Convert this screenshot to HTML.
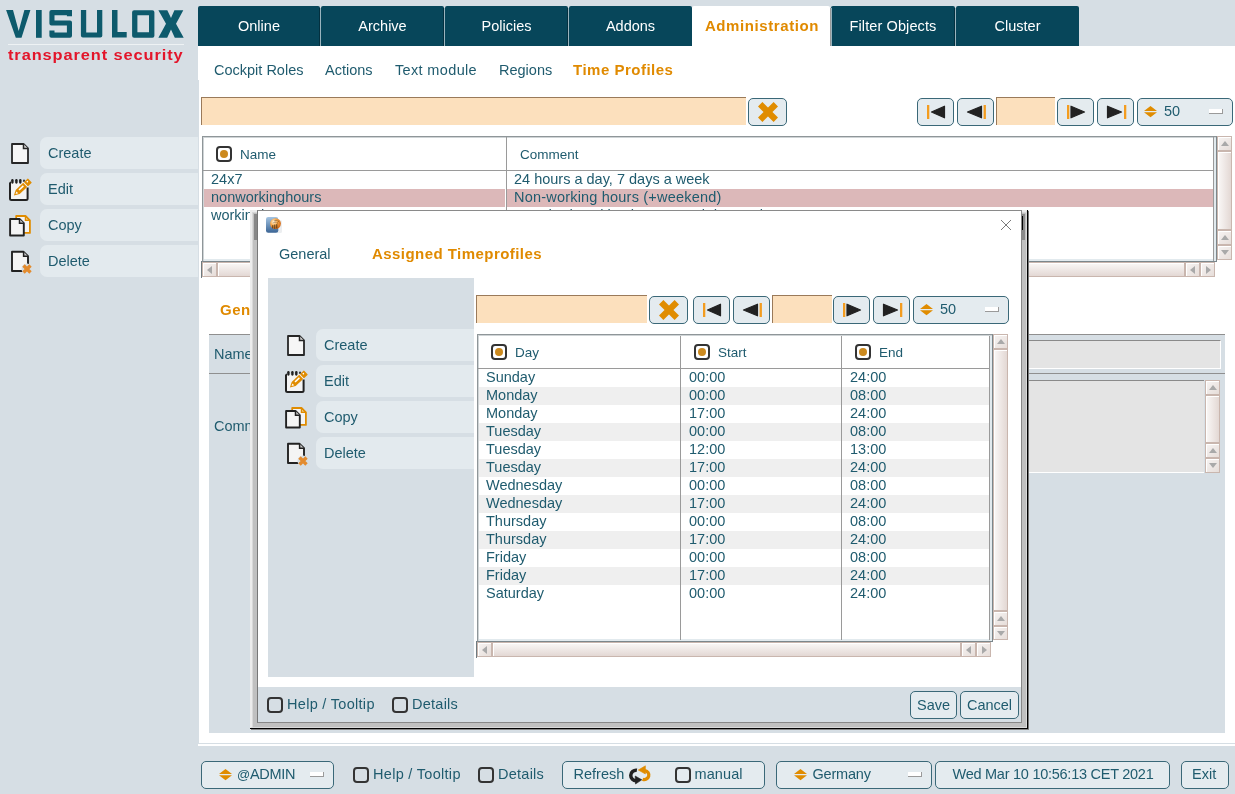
<!DOCTYPE html>
<html><head><meta charset="utf-8">
<style>
*{box-sizing:border-box;margin:0;padding:0}
html,body{width:1235px;height:794px;overflow:hidden}
body{background:#d6dee4;font-family:"Liberation Sans",sans-serif;color:#1f5b6e;position:relative;font-size:14.5px}
.a{position:absolute}
.t{position:absolute;white-space:nowrap;line-height:18px}
svg{position:absolute;overflow:visible}
.tab{position:absolute;top:6px;height:40px;background:#07465a;color:#fff;font-size:14.5px;display:flex;align-items:center;justify-content:center;border-radius:2px 2px 0 0}
.sep{position:absolute;top:8px;width:1px;height:38px;background:#9ab4be;box-shadow:-1px 0 0 #03303f}
.btn{position:absolute;background:#e4ebef;border:1px solid #3a6878;border-radius:5px}
.filt{position:absolute;background:#fce0bd;border-top:1px solid #9a7a5a;border-left:1px solid #9a7a5a}
.side{position:absolute;left:40px;width:158px;height:32px;background:#e3eaee;border-radius:7px 0 0 7px;line-height:32px;padding-left:8px}
.orange{color:#e08a00}
.radio{position:absolute;width:16px;height:16px;border:2px solid #333;border-radius:4px;background:#fff}
.radio:after{content:"";position:absolute;left:2px;top:2px;width:8px;height:8px;border-radius:50%;background:#cc8a1f}
.chk{position:absolute;width:16px;height:16px;border:2px solid #333;border-radius:4px;background:transparent}
.sbx{position:absolute;border:1px solid #c9b6ae;background:linear-gradient(135deg,#f7f4f3,#e6ddd9);box-shadow:inset 1px 1px 0 #fff}
.sbx.th{background:linear-gradient(90deg,#faf8f7,#e3d8d4)}
.sbx.thh{background:linear-gradient(180deg,#faf8f7,#e3d8d4)}
.sbx:after{content:"";position:absolute;width:0;height:0}
.sbx.up:after{left:2.5px;top:4px;border-left:4px solid transparent;border-right:4px solid transparent;border-bottom:5px solid #a9a9a9}
.sbx.dn:after{left:2.5px;top:4px;border-left:4px solid transparent;border-right:4px solid transparent;border-top:5px solid #a9a9a9}
.sbx.lf:after{left:4px;top:2.5px;border-top:4px solid transparent;border-bottom:4px solid transparent;border-right:5px solid #a9a9a9}
.sbx.rt:after{left:5px;top:2.5px;border-top:4px solid transparent;border-bottom:4px solid transparent;border-left:5px solid #a9a9a9}
.hd{font-size:13.5px}
.rw span{position:absolute;top:-1px}
.dash{position:absolute;width:14px;height:5px;background:#fff;border-right:1px solid #9a9a9a;border-bottom:1.5px solid #9a9a9a}
</style></head><body><div id="root" style="position:absolute;left:0;top:0;width:1235px;height:794px;background:#d6dee4;will-change:transform">
<svg width="0" height="0" style="position:absolute">
<defs>
<g id="ix"><path d="M2.2 2.2L17.8 17.8M17.8 2.2L2.2 17.8" stroke="#e08c00" stroke-width="6.2"/></g>
<g id="pfirst"><rect x="10" y="7" width="2.3" height="14" fill="#f39c1f"/><path d="M14.5 14L27.5 8.2V19.8Z" fill="#222" stroke="#222" stroke-width="1.2" stroke-linejoin="round"/></g>
<g id="pprev"><path d="M10.5 14L24.5 8.2V19.8Z" fill="#222" stroke="#222" stroke-width="1.2" stroke-linejoin="round"/><rect x="26.6" y="7" width="2.3" height="14" fill="#f39c1f"/></g>
<g id="pnext"><rect x="10" y="7" width="2.3" height="14" fill="#f39c1f"/><path d="M27.5 14L14 8.2V19.8Z" fill="#222" stroke="#222" stroke-width="1.2" stroke-linejoin="round"/></g>
<g id="plast"><path d="M24.5 14L10.5 8.2V19.8Z" fill="#222" stroke="#222" stroke-width="1.2" stroke-linejoin="round"/><rect x="27" y="7" width="2.3" height="14" fill="#f39c1f"/></g>
<g id="updown"><path d="M0 5L6.5 0L13 5Z M0 6.3H13L6.5 11.3Z" fill="#e08c00"/></g>
<g id="doc"><path d="M1 1H12.5L17 5.5V20H1Z" fill="#f6f6f6" stroke="#262626" stroke-width="1.8" stroke-linejoin="round"/><path d="M12.5 1V5.5H17" fill="#d8d8d8" stroke="#262626" stroke-width="1.5"/></g>
<g id="edit"><rect x="4" y="6.3" width="17.6" height="17.8" rx="1.5" fill="#f4f4f4"/><path d="M4 7V22.6Q4 24.1 5.5 24.1H20.1Q21.6 24.1 21.6 22.6V11.5" fill="none" stroke="#222" stroke-width="2"/><path d="M4 7Q4 6.3 5 6.3" fill="none" stroke="#222" stroke-width="1.6"/><g fill="#222"><rect x="5.2" y="3.1" width="2.4" height="4.6" rx="1.1"/><rect x="9.2" y="3.1" width="2.4" height="4.6" rx="1.1"/><rect x="13.1" y="3.1" width="2.4" height="4.6" rx="1.1"/><rect x="17.2" y="3.4" width="1.6" height="2.6" rx="0.8"/></g>
<g transform="translate(7.9,19.6) rotate(-43.5)"><path d="M0 0L5.2 -2.9H15.6V2.9H5.2Z" fill="#e08c00"/><path d="M2.3 0L4.7 -1.3V1.3Z" fill="#fff"/><rect x="7.6" y="-1.3" width="6" height="1.5" fill="#fff"/><rect x="16.6" y="-2.9" width="5.4" height="5.8" rx="0.5" fill="#e08c00"/><circle cx="19.4" cy="-0.9" r="0.8" fill="#fff"/></g></g>
<g id="copy"><path d="M10.2 6H19.5L23.9 10.3V22.9H10.2Z" fill="#f4f4f4" stroke="#e08c00" stroke-width="1.8" stroke-linejoin="round"/><path d="M19.5 6V10.3H23.9" fill="none" stroke="#e08c00" stroke-width="1.5"/><path d="M4.1 9H13.5L17.8 13.2V25.5H4.1Z" fill="#f4f4f4" stroke="#222" stroke-width="1.9" stroke-linejoin="round"/><path d="M13.5 9V13.2H17.8" fill="#ccc" stroke="#222" stroke-width="1.5"/></g>
<g id="del"><path d="M6 5.8H17.6L22 10.2V25H6Z" fill="#f4f4f4" stroke="#222" stroke-width="1.9" stroke-linejoin="round"/><path d="M17.6 5.8V10.2H22" fill="#ccc" stroke="#222" stroke-width="1.5"/><circle cx="21" cy="23" r="5.5" fill="#d6dee4"/><path d="M17.5 19.5L24.5 26.5M24.5 19.5L17.5 26.5" stroke="#e38b2e" stroke-width="3.4"/></g>
<g id="refresh"><path d="M16.9 10.3A5.25 5.25 0 1 0 16.5 20.7" fill="none" stroke="#222" stroke-width="3.5"/><path d="M15.2 16L15.5 24L21.8 19.8Z" fill="#222" stroke="#222" stroke-width="0.6" stroke-linejoin="round"/><path d="M25 10.6A4.5 4.5 0 1 1 22.6 19.2" fill="none" stroke="#e08c00" stroke-width="3.3"/><path d="M25.4 5.8L25.4 14L18.3 10Z" fill="#e08c00" stroke="#e08c00" stroke-width="0.6" stroke-linejoin="round"/></g>
</defs></svg>

<!-- logo -->
<svg class="a" style="left:0;top:0" width="190" height="70">
<g fill="#0d5a6c">
<path d="M6.1 10H13L18.7 31L24.4 10H30.4L21.5 37.8H15.8Z"/>
<rect x="36" y="10" width="5.7" height="27.8"/>
<path d="M51.5 10H72V16.3H66.9V15.2H54.5V20.5H70Q72 20.5 72 22.5V35.8Q72 37.8 70 37.8H51.4Q49.4 37.8 49.4 35.8V30.5H54.5V32.5H66.9V25.5H51.4Q49.4 25.5 49.4 23.5V12Q49.4 10 51.5 10Z"/>
<path d="M80.9 10H86.2V32.4H97V10H102.3V35.8Q102.3 37.5 100.3 37.5H82.9Q80.9 37.5 80.9 35.5Z"/>
<path d="M112 10H117.5V32H126.7V37.6H112Z"/>
<path d="M134.1 10.2H152.4Q154.4 10.2 154.4 12.2V35.8Q154.4 37.8 152.4 37.8H134.1Q132.1 37.8 132.1 35.8V12.2Q132.1 10.2 134.1 10.2ZM137.4 15.2V32.2H149V15.2Z"/>
<path d="M158.4 10.2H167.3L171 18L174.4 10.2H183.3L176 23.7L183.7 37.8H174.8L171 29.5L167.2 37.8H158.4L166 23.7Z"/>
</g>
<rect x="8" y="44" width="176" height="1" fill="#eef2f4"/>
</svg>
<div class="t" style="left:8px;top:46px;font-size:14.5px;font-weight:700;color:#e3152a;transform:scaleX(1.13);transform-origin:0 0;letter-spacing:0.8px">transparent security</div>

<!-- tabs -->
<div class="tab" style="left:198px;width:122px">Online</div>
<div class="sep" style="left:320px"></div>
<div class="tab" style="left:321px;width:123px">Archive</div>
<div class="sep" style="left:444px"></div>
<div class="tab" style="left:445px;width:123px">Policies</div>
<div class="sep" style="left:568px"></div>
<div class="tab" style="left:569px;width:123px">Addons</div>
<div class="tab" style="left:692px;width:138px;background:#fff;color:#e08a00;font-weight:700;font-size:15px;letter-spacing:0.6px;padding:0 0 2px 2px">Administration</div>
<div class="tab" style="left:831px;width:124px;letter-spacing:0.1px">Filter Objects</div><div class="a" style="left:830px;top:8px;width:1px;height:38px;background:#999"></div><div class="a" style="left:831px;top:8px;width:1px;height:38px;background:#9ab4be"></div>
<div class="sep" style="left:955px"></div>
<div class="tab" style="left:956px;width:123px">Cluster</div>

<!-- content white -->
<div class="a" style="left:198px;top:46px;width:1037px;height:34px;background:#fff"></div><div class="a" style="left:199px;top:80px;width:1036px;height:666px;background:#fff"></div><div class="a" style="left:198px;top:744px;width:1px;height:2px;background:#fff"></div>
<div class="a" style="left:198px;top:743px;width:1037px;height:1px;background:#d6dee4"></div>

<!-- subtabs -->
<div class="t" style="left:214px;top:61px">Cockpit Roles</div>
<div class="t" style="left:325px;top:61px">Actions</div>
<div class="t" style="left:395px;top:61px;letter-spacing:0.35px">Text module</div>
<div class="t" style="left:499px;top:61px">Regions</div>
<div class="t orange" style="left:573px;top:61px;font-weight:700;font-size:15px;letter-spacing:0.5px">Time Profiles</div>

<!-- filter row -->
<div class="filt" style="left:201px;top:97px;width:545px;height:28px"></div>
<div class="btn" style="left:748px;top:98px;width:39px;height:28px"><svg style="left:9px;top:3px" width="20" height="20"><use href="#ix"/></svg></div>
<div class="btn" style="left:917px;top:98px;width:37px;height:28px"><svg style="left:-1px;top:-1px" width="37" height="28"><use href="#pfirst"/></svg></div>
<div class="btn" style="left:957px;top:98px;width:37px;height:28px"><svg style="left:-1px;top:-1px" width="37" height="28"><use href="#pprev"/></svg></div>
<div class="filt" style="left:996px;top:97px;width:59px;height:28px"></div>
<div class="btn" style="left:1057px;top:98px;width:37px;height:28px"><svg style="left:-1px;top:-1px" width="37" height="28"><use href="#pnext"/></svg></div>
<div class="btn" style="left:1097px;top:98px;width:37px;height:28px"><svg style="left:-1px;top:-1px" width="37" height="28"><use href="#plast"/></svg></div>
<div class="btn" style="left:1137px;top:98px;width:96px;height:28px"><svg style="left:6px;top:7px" width="13" height="12"><use href="#updown"/></svg><div class="t" style="left:26px;top:3px">50</div><div class="dash" style="left:71px;top:10px"></div></div>

<!-- sidebar -->
<svg style="left:11px;top:143px" width="20" height="22"><use href="#doc"/></svg><svg style="left:6px;top:176px" width="28" height="28"><use href="#edit"/></svg><svg style="left:6px;top:210px" width="28" height="28"><use href="#copy"/></svg><svg style="left:6px;top:246px" width="28" height="28"><use href="#del"/></svg>
<div class="side" style="top:137px">Create</div>
<div class="side" style="top:173px">Edit</div>
<div class="side" style="top:209px">Copy</div>
<div class="side" style="top:245px">Delete</div>


<!-- main table -->
<div class="a" style="left:202px;top:136px;width:1015px;height:126px;border:1px solid #8f9699;border-right-color:#7b878c;border-bottom-color:#7b878c;box-shadow:inset 1px 1px 0 #cfd4d6,inset -2px -2px 0 #e2eaee;background:#fff"></div>
<div class="a" style="left:203px;top:170px;width:1011px;height:1px;background:#9a9a9a"></div>
<div class="a" style="left:506px;top:137px;width:1px;height:124px;background:#9a9a9a"></div>
<div class="a" style="left:1213px;top:137px;width:1px;height:124px;background:#9a9a9a"></div>
<div class="radio" style="left:216px;top:146px"></div>
<div class="t hd" style="left:240px;top:146px">Name</div>
<div class="t hd" style="left:520px;top:146px">Comment</div>
<div class="t" style="left:211px;top:170px">24x7</div>
<div class="t" style="left:514px;top:170px">24 hours a day, 7 days a week</div>
<div class="a" style="left:204px;top:189px;width:301px;height:18px;background:#dcb8b9"></div>
<div class="a" style="left:507px;top:189px;width:706px;height:18px;background:#dcb8b9"></div>
<div class="t" style="left:211px;top:188px">nonworkinghours</div>
<div class="t" style="left:514px;top:188px;letter-spacing:0.2px">Non-working hours (+weekend)</div>
<div class="t" style="left:211px;top:206px">workinghours</div>
<div class="t" style="left:514px;top:206px">Standard working hours, weekdays only</div>
<div class="sbx up" style="left:1217px;top:136px;width:15px;height:15px"></div><div class="sbx th" style="left:1217px;top:151px;width:15px;height:79px"></div><div class="sbx up" style="left:1217px;top:230px;width:15px;height:15px"></div><div class="sbx dn" style="left:1217px;top:245px;width:15px;height:15px"></div>
<div class="sbx lf" style="left:202px;top:262px;width:15px;height:15px"></div><div class="sbx thh" style="left:217px;top:262px;width:968px;height:15px"></div><div class="sbx lf" style="left:1185px;top:262px;width:15px;height:15px"></div><div class="sbx rt" style="left:1200px;top:262px;width:15px;height:15px"></div>

<div class="a" style="left:201px;top:261px;width:1px;height:17px;background:#6f7b80"></div>
<!-- general panel (behind dialog) -->
<div class="t orange" style="left:220px;top:301px;font-weight:700;font-size:15px;letter-spacing:0.5px">General</div>
<div class="a" style="left:209px;top:334px;width:1016px;height:399px;background:#d6dee4"></div>
<div class="a" style="left:209px;top:334px;width:1016px;height:1px;background:#8f8f8f"></div>
<div class="a" style="left:209px;top:373px;width:1016px;height:1px;background:#8f8f8f"></div>
<div class="t" style="left:214px;top:345px">Name</div>
<div class="t" style="left:214px;top:417px">Comment</div>
<div class="a" style="left:300px;top:340px;width:921px;height:29px;background:#e4e4e4;border-top:1px solid #8a8a8a;border-bottom:1px solid #fff;border-right:1px solid #fff"></div>
<div class="a" style="left:300px;top:380px;width:904px;height:93px;background:#e4e4e4;border-top:1px solid #8a8a8a;border-bottom:1px solid #fff"></div>
<div class="sbx up" style="left:1205px;top:380px;width:15px;height:15px"></div><div class="sbx th" style="left:1205px;top:395px;width:15px;height:48px"></div><div class="sbx up" style="left:1205px;top:443px;width:15px;height:15px"></div><div class="sbx dn" style="left:1205px;top:458px;width:15px;height:15px"></div>

<!-- dialog frame -->
<div class="a" style="left:250px;top:210px;width:779px;height:520px;background:#c0c0c0;border-left:2px solid #ececec;border-top:2px solid #ececec;box-shadow:inset 1px 1px 0 #d8d8d8"></div>
<div class="a" style="left:1026px;top:211px;width:1px;height:517px;background:#dadada"></div>
<div class="a" style="left:251px;top:727px;width:776px;height:1px;background:#dadada"></div>
<div class="a" style="left:1027px;top:210px;width:1px;height:519px;background:#000"></div>
<div class="a" style="left:1028px;top:211px;width:1px;height:519px;background:#777"></div>
<div class="a" style="left:250px;top:728px;width:778px;height:1px;background:#000"></div>
<div class="a" style="left:251px;top:729px;width:778px;height:1px;background:#888"></div>
<div class="a" style="left:254px;top:214px;width:3px;height:26px;background:#888"></div>
<div class="a" style="left:1021px;top:214px;width:4px;height:26px;background:#8a8a8a"></div>
<div class="a" style="left:1021px;top:216px;width:2px;height:14px;background:#000"></div>
<div class="a" style="left:257px;top:210px;width:765px;height:513px;background:#fff;border-top:1px solid #8a8a8a;border-left:1px solid #777;border-right:1px solid #888;border-bottom:1px solid #888"></div>
<div class="a" style="left:258px;top:687px;width:763px;height:35px;background:#d6dee4"></div>
<svg style="left:1001px;top:220px" width="11" height="11"><path d="M0 0L10 10M10 0L0 10" stroke="#7a7a7a" stroke-width="1"/></svg>
<svg style="left:265px;top:216px" width="18" height="18">
<defs><linearGradient id="gb" x1="0" y1="0" x2="0" y2="1"><stop offset="0" stop-color="#a4c4e2"/><stop offset="1" stop-color="#3a6494"/></linearGradient>
<radialGradient id="go" cx="0.35" cy="0.35" r="0.75"><stop offset="0" stop-color="#fff4dc"/><stop offset="0.45" stop-color="#f7a545"/><stop offset="1" stop-color="#cf6010"/></radialGradient></defs>
<rect x="12" y="4" width="5" height="13" rx="1.5" fill="#eceef0"/>
<rect x="1" y="1" width="12.3" height="15.8" rx="2.2" fill="url(#gb)"/>
<circle cx="10.5" cy="7.6" r="5.4" fill="url(#go)"/>
<path d="M7.8 12.4V9.2M9.8 12.8V8.6M11.8 12.4V8.2" stroke="#3a2a18" stroke-width="0.9"/>
<path d="M8.6 6.6Q11 5.4 13.2 7.6M9.6 4.6Q12.6 3.8 14.6 6.4" fill="none" stroke="#5a3a18" stroke-width="0.8" stroke-dasharray="1 0.8"/>
</svg>
<div class="t" style="left:279px;top:245px">General</div>
<div class="t orange" style="left:372px;top:245px;font-weight:700;font-size:15px;letter-spacing:0.45px">Assigned Timeprofiles</div>
<div class="a" style="left:268px;top:278px;width:206px;height:399px;background:#d6dee4"></div>
<svg style="left:287px;top:335px" width="20" height="22"><use href="#doc"/></svg><svg style="left:282px;top:368px" width="28" height="28"><use href="#edit"/></svg><svg style="left:282px;top:402px" width="28" height="28"><use href="#copy"/></svg><svg style="left:282px;top:438px" width="28" height="28"><use href="#del"/></svg>
<div class="side" style="left:316px;top:329px;width:158px">Create</div>
<div class="side" style="left:316px;top:365px;width:158px">Edit</div>
<div class="side" style="left:316px;top:401px;width:158px">Copy</div>
<div class="side" style="left:316px;top:437px;width:158px">Delete</div>

<!-- dialog filter row -->
<div class="filt" style="left:476px;top:295px;width:171px;height:28px"></div>
<div class="btn" style="left:649px;top:296px;width:39px;height:28px"><svg style="left:9px;top:3px" width="20" height="20"><use href="#ix"/></svg></div>
<div class="btn" style="left:693px;top:296px;width:37px;height:28px"><svg style="left:-1px;top:-1px" width="37" height="28"><use href="#pfirst"/></svg></div>
<div class="btn" style="left:733px;top:296px;width:37px;height:28px"><svg style="left:-1px;top:-1px" width="37" height="28"><use href="#pprev"/></svg></div>
<div class="filt" style="left:772px;top:295px;width:60px;height:28px"></div>
<div class="btn" style="left:833px;top:296px;width:37px;height:28px"><svg style="left:-1px;top:-1px" width="37" height="28"><use href="#pnext"/></svg></div>
<div class="btn" style="left:873px;top:296px;width:37px;height:28px"><svg style="left:-1px;top:-1px" width="37" height="28"><use href="#plast"/></svg></div>
<div class="btn" style="left:913px;top:296px;width:96px;height:28px"><svg style="left:6px;top:7px" width="13" height="12"><use href="#updown"/></svg><div class="t" style="left:26px;top:3px">50</div><div class="dash" style="left:71px;top:10px"></div></div>

<!-- dialog table -->
<div class="a" style="left:477px;top:334px;width:516px;height:308px;border:1px solid #8f9699;border-right-color:#7b878c;border-bottom-color:#7b878c;box-shadow:inset 1px 1px 0 #cfd4d6,inset -2px -2px 0 #e2eaee;background:#fff"></div>
<div class="a" style="left:478px;top:368px;width:512px;height:1px;background:#9a9a9a"></div>
<div class="a" style="left:680px;top:336px;width:1px;height:304px;background:#9a9a9a"></div>
<div class="a" style="left:841px;top:336px;width:1px;height:304px;background:#9a9a9a"></div>
<div class="a" style="left:989px;top:336px;width:1px;height:304px;background:#9a9a9a"></div>
<div class="radio" style="left:491px;top:344px"></div>
<div class="t hd" style="left:515px;top:344px">Day</div>
<div class="radio" style="left:694px;top:344px"></div>
<div class="t hd" style="left:718px;top:344px">Start</div>
<div class="radio" style="left:855px;top:344px"></div>
<div class="t hd" style="left:879px;top:344px">End</div>
<div class="t rw" style="top:369px"><span style="left:486px">Sunday</span><span style="left:689px">00:00</span><span style="left:850px">24:00</span></div>
<div class="a" style="left:479px;top:387px;width:201px;height:18px;background:#efefef"></div><div class="a" style="left:681px;top:387px;width:160px;height:18px;background:#efefef"></div><div class="a" style="left:842px;top:387px;width:147px;height:18px;background:#efefef"></div>
<div class="t rw" style="top:387px"><span style="left:486px">Monday</span><span style="left:689px">00:00</span><span style="left:850px">08:00</span></div>
<div class="t rw" style="top:405px"><span style="left:486px">Monday</span><span style="left:689px">17:00</span><span style="left:850px">24:00</span></div>
<div class="a" style="left:479px;top:423px;width:201px;height:18px;background:#efefef"></div><div class="a" style="left:681px;top:423px;width:160px;height:18px;background:#efefef"></div><div class="a" style="left:842px;top:423px;width:147px;height:18px;background:#efefef"></div>
<div class="t rw" style="top:423px"><span style="left:486px">Tuesday</span><span style="left:689px">00:00</span><span style="left:850px">08:00</span></div>
<div class="t rw" style="top:441px"><span style="left:486px">Tuesday</span><span style="left:689px">12:00</span><span style="left:850px">13:00</span></div>
<div class="a" style="left:479px;top:459px;width:201px;height:18px;background:#efefef"></div><div class="a" style="left:681px;top:459px;width:160px;height:18px;background:#efefef"></div><div class="a" style="left:842px;top:459px;width:147px;height:18px;background:#efefef"></div>
<div class="t rw" style="top:459px"><span style="left:486px">Tuesday</span><span style="left:689px">17:00</span><span style="left:850px">24:00</span></div>
<div class="t rw" style="top:477px"><span style="left:486px">Wednesday</span><span style="left:689px">00:00</span><span style="left:850px">08:00</span></div>
<div class="a" style="left:479px;top:495px;width:201px;height:18px;background:#efefef"></div><div class="a" style="left:681px;top:495px;width:160px;height:18px;background:#efefef"></div><div class="a" style="left:842px;top:495px;width:147px;height:18px;background:#efefef"></div>
<div class="t rw" style="top:495px"><span style="left:486px">Wednesday</span><span style="left:689px">17:00</span><span style="left:850px">24:00</span></div>
<div class="t rw" style="top:513px"><span style="left:486px">Thursday</span><span style="left:689px">00:00</span><span style="left:850px">08:00</span></div>
<div class="a" style="left:479px;top:531px;width:201px;height:18px;background:#efefef"></div><div class="a" style="left:681px;top:531px;width:160px;height:18px;background:#efefef"></div><div class="a" style="left:842px;top:531px;width:147px;height:18px;background:#efefef"></div>
<div class="t rw" style="top:531px"><span style="left:486px">Thursday</span><span style="left:689px">17:00</span><span style="left:850px">24:00</span></div>
<div class="t rw" style="top:549px"><span style="left:486px">Friday</span><span style="left:689px">00:00</span><span style="left:850px">08:00</span></div>
<div class="a" style="left:479px;top:567px;width:201px;height:18px;background:#efefef"></div><div class="a" style="left:681px;top:567px;width:160px;height:18px;background:#efefef"></div><div class="a" style="left:842px;top:567px;width:147px;height:18px;background:#efefef"></div>
<div class="t rw" style="top:567px"><span style="left:486px">Friday</span><span style="left:689px">17:00</span><span style="left:850px">24:00</span></div>
<div class="t rw" style="top:585px"><span style="left:486px">Saturday</span><span style="left:689px">00:00</span><span style="left:850px">24:00</span></div>
<div class="sbx up" style="left:993px;top:334px;width:15px;height:15px"></div><div class="sbx th" style="left:993px;top:349px;width:15px;height:262px"></div><div class="sbx up" style="left:993px;top:611px;width:15px;height:15px"></div><div class="sbx dn" style="left:993px;top:626px;width:15px;height:14px"></div>
<div class="sbx lf" style="left:477px;top:642px;width:15px;height:15px"></div><div class="sbx thh" style="left:492px;top:642px;width:469px;height:15px"></div><div class="sbx lf" style="left:961px;top:642px;width:15px;height:15px"></div><div class="sbx rt" style="left:976px;top:642px;width:15px;height:15px"></div>

<div class="a" style="left:476px;top:641px;width:1px;height:17px;background:#6f7b80"></div>
<!-- dialog footer -->
<div class="chk" style="left:267px;top:697px"></div>
<div class="t" style="left:287px;top:695px;letter-spacing:0.3px">Help / Tooltip</div>
<div class="chk" style="left:392px;top:697px"></div>
<div class="t" style="left:412px;top:695px;letter-spacing:0.25px">Details</div>
<div class="btn" style="left:910px;top:691px;width:47px;height:28px;text-align:center;line-height:26px">Save</div>
<div class="btn" style="left:960px;top:691px;width:59px;height:28px;text-align:center;line-height:26px">Cancel</div>

<!-- status bar -->
<div class="btn" style="left:201px;top:761px;width:133px;height:28px"><svg style="left:17px;top:7px" width="13" height="12"><use href="#updown"/></svg><div class="t" style="left:35px;top:3px;letter-spacing:-0.3px"><span style="font-size:13px">@</span>ADMIN</div><div class="dash" style="left:108px;top:10px"></div></div>
<div class="chk" style="left:353px;top:767px"></div>
<div class="t" style="left:373px;top:765px;letter-spacing:0.3px">Help / Tooltip</div>
<div class="chk" style="left:478px;top:767px"></div>
<div class="t" style="left:498px;top:765px;letter-spacing:0.25px">Details</div>
<div class="btn" style="left:562px;top:761px;width:203px;height:28px"><div class="t" style="left:10.5px;top:3px">Refresh</div><svg style="left:57px;top:-2px" width="32" height="30"><use href="#refresh"/></svg><div class="chk" style="left:112px;top:5px"></div><div class="t" style="left:131.5px;top:3px;letter-spacing:0.1px">manual</div></div>
<div class="btn" style="left:776px;top:761px;width:156px;height:28px"><svg style="left:17px;top:7px" width="13" height="12"><use href="#updown"/></svg><div class="t" style="left:35.5px;top:3px;letter-spacing:-0.2px">Germany</div><div class="dash" style="left:131px;top:10px"></div></div>
<div class="btn" style="left:935px;top:761px;width:235px;height:28px"><div class="t" style="left:16.5px;top:3px;letter-spacing:-0.26px">Wed Mar 10 10:56:13 CET 2021</div></div>
<div class="btn" style="left:1181px;top:761px;width:48px;height:28px"><div class="t" style="left:10px;top:3px">Exit</div></div>

</div></body></html>
